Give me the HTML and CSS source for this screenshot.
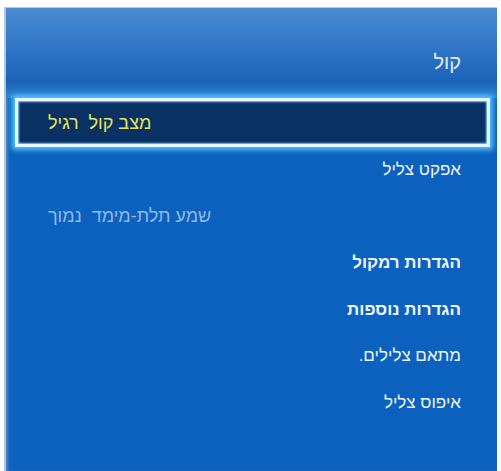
FILE: index.html
```html
<!DOCTYPE html>
<html lang="he" dir="rtl">
<head>
<meta charset="utf-8">
<title>קול</title>
<link rel="stylesheet" href="styles.css">
</head>
<body>
<div class="panel">
  <div class="header"><span class="title">קול</span></div>
  <div class="selected"><span class="sel-text">מצב קול&nbsp; רגיל</span></div>
  <ul class="menu">
    <li class="item">אפקט צליל</li>
    <li class="item disabled">שמע תלת-מימד&nbsp; נמוך</li>
    <li class="item bold">הגדרות רמקול</li>
    <li class="item bold">הגדרות נוספות</li>
    <li class="item">מתאם צלילים.</li>
    <li class="item">איפוס צליל</li>
  </ul>
</div>
</body>
</html>
```

FILE: styles.css
```css
html, body {
  margin: 0;
  padding: 0;
  background: #ffffff;
  width: 501px;
  height: 471px;
  overflow: hidden;
}
body {
  font-family: "Liberation Sans", "DejaVu Sans", sans-serif;
}
.panel {
  margin: 7px 4px 0 4px;
  height: 464px;
  background: #0b61bd;
  border-top: 1px solid #b9c9dc;
  border-left: 2px solid #b3c6dc;
  box-shadow: inset 3px 0 3px -1px rgba(120,160,210,0.6);
  box-sizing: border-box;
  display: flex;
  flex-direction: column;
}
.header {
  height: 90px;
  flex: none;
  background: linear-gradient(to bottom, #4b8bd2 0%, #3a80cc 25%, #2a70c2 55%, #1c63b8 82%, #2a86d6 100%);
  display: flex;
  align-items: flex-start;
  padding: 43px 36px 0 0;
  box-sizing: border-box;
}
.title {
  color: #dfeefc;
  font-size: 20px;
  line-height: 22px;
}
.selected {
  flex: none;
  margin: 0 7px 0 9px;
  height: 49px;
  box-sizing: border-box;
  border: 3px solid #e6f7ff;
  box-shadow: 0 0 5px 3px #57c4ff, inset 0 0 2px 1px #7fd4ff;
  background: #0a3163;
  display: flex;
  align-items: center;
  justify-content: flex-end;
  padding-left: 30px;
}
.sel-text {
  color: #e4e65a;
  font-size: 18px;
  line-height: 20px;
}
.menu {
  list-style: none;
  margin: 0;
  padding: 0;
}
.item {
  height: 46.5px;
  display: flex;
  align-items: center;
  padding-right: 36px;
  color: #eef5fd;
  font-size: 17px;
}
.item.bold {
  font-weight: bold;
}
.item.disabled {
  justify-content: flex-end;
  padding-left: 42px;
  padding-right: 0;
  font-size: 18px;
  color: #8ebbe8;
}
```
